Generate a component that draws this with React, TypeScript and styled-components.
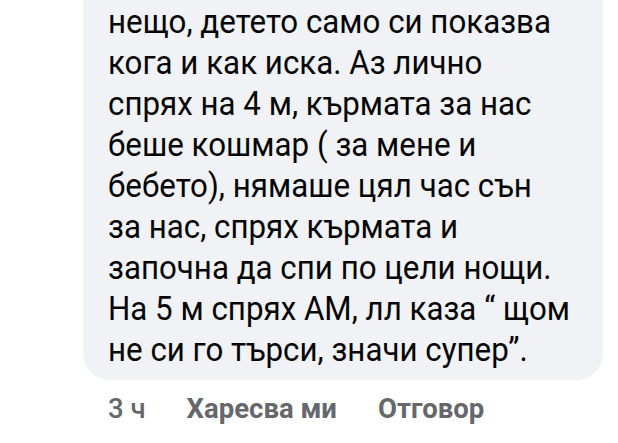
import styled, { createGlobalStyle } from 'styled-components';

const GlobalStyle = createGlobalStyle`
  html, body {
    margin: 0;
    padding: 0;
    background: #ffffff;
  }
  body {
    font-family: Roboto, "Liberation Sans", Arial, sans-serif;
    -webkit-font-smoothing: antialiased;
  }
`;

const Page = styled.div`
  width: 618px;
  height: 443px;
  overflow: hidden;
  display: flex;
  flex-direction: column;
  padding-left: 83px;
  box-sizing: border-box;
`;

const Bubble = styled.div`
  width: 520px;
  box-sizing: border-box;
  background: #f0f2f5;
  border-radius: 0 0 26px 26px;
  padding: 2px 20px 9px 25px;
  color: #050505;
  font-size: 31.3px;
  line-height: 41px;
`;

// the screenshot's text is a little taller than plain Roboto
const Line = styled.div`
  white-space: nowrap;
  transform: scaleY(1.08);
  transform-origin: 50% 75%;
`;

const Actions = styled.div`
  display: flex;
  gap: 41px;
  margin-top: 14px;
  padding-left: 25px;
  font-size: 27.5px;
  line-height: 30px;
  color: #65676b;
`;

const Action = styled.span<{ $bold?: boolean }>`
  font-weight: ${(p) => (p.$bold ? 700 : 500)};
`;

const lines = [
  'нещо, детето само си показва',
  'кога и как иска. Аз лично',
  'спрях на 4 м, кърмата за нас',
  'беше кошмар ( за мене и',
  'бебето), нямаше цял час сън',
  'за нас, спрях кърмата и',
  'започна да спи по цели нощи.',
  'На 5 м спрях АМ, лл каза “ щом',
  'не си го търси, значи супер”.',
];

export default function App() {
  return (
    <Page>
      <GlobalStyle />
      <Bubble>
        {lines.map((line, i) => (
          <Line key={i}>{line}</Line>
        ))}
      </Bubble>
      <Actions>
        <Action>3 ч</Action>
        <Action $bold>Харесва ми</Action>
        <Action $bold>Отговор</Action>
      </Actions>
    </Page>
  );
}
